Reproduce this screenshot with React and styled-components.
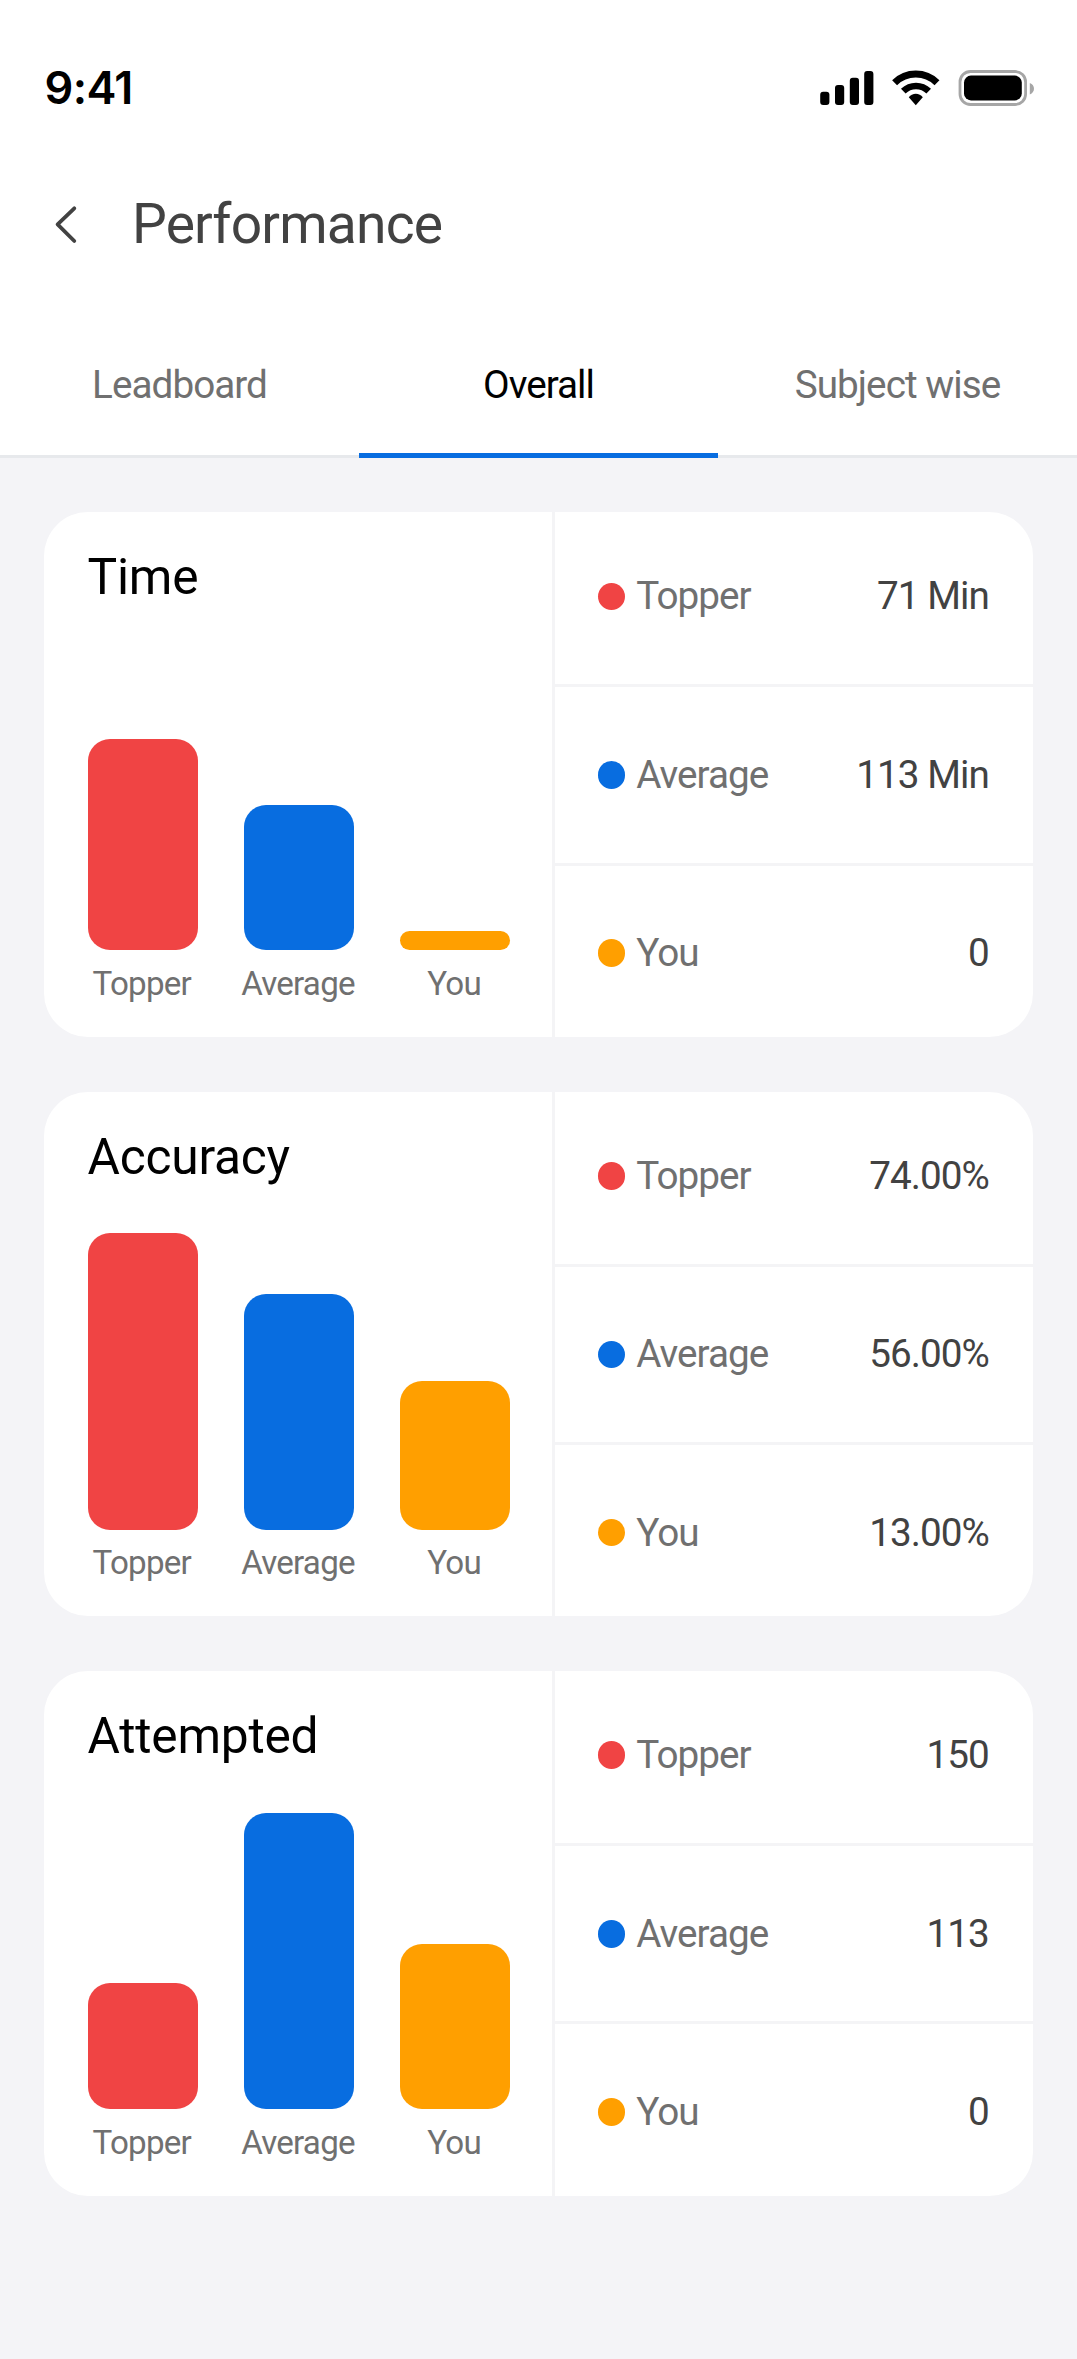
import React from "react";
import styled, { createGlobalStyle } from "styled-components";

const GlobalStyle = createGlobalStyle`
  *, *::before, *::after { box-sizing: border-box; }
  body {
    margin: 0;
    background: #f4f4f7;
    font-family: Roboto, "Liberation Sans", sans-serif;
  }
`;

const colors = { topper: "#f04444", average: "#086de0", you: "#ff9f00" };

const Screen = styled.div`
  width: 1077px;
  min-height: 2359px;
  display: flex;
  flex-direction: column;
  background: #f4f4f7;
`;

const Top = styled.header`
  background: #fff;
`;

const StatusBar = styled.div`
  height: 136px;
  padding: 40px 43px 0 44.6px;
  display: flex;
  align-items: center;
  justify-content: space-between;
`;

const Clock = styled.span`
  font-family: Inter, sans-serif;
  font-size: 45px;
  font-weight: 600;
  line-height: 54px;
  letter-spacing: -0.015em;
  color: #000;
`;

const StatusIcons = styled.svg`
  width: 214px;
  height: 36px;
  display: block;
`;

const TitleBar = styled.div`
  height: 176px;
  padding-left: 54px;
  display: flex;
  align-items: center;
  gap: 54px;
`;

const BackButton = styled.button`
  padding: 0;
  border: 0;
  background: none;
  width: 24px;
  height: 40px;
  display: flex;
`;

const PageTitle = styled.h1`
  margin: 0;
  font-size: 55.2px;
  font-weight: 400;
  line-height: 64px;
  letter-spacing: -0.015em;
  color: #424242;
`;

const Tabs = styled.nav`
  display: grid;
  grid-template-columns: repeat(3, 1fr);
  height: 146px;
`;

const Tab = styled.a`
  display: flex;
  align-items: center;
  justify-content: center;
  font-size: 38.66px;
  line-height: 46px;
  letter-spacing: -0.025em;
  color: ${(p) => (p.$active ? "#000" : "#707070")};
  box-shadow: inset 0 ${(p) => (p.$active ? "-5px #086de0" : "-3px #e7e9ec")};
`;

const Cards = styled.main`
  display: flex;
  flex-direction: column;
  gap: 55px;
  padding: 54.4px 44.2px;
`;

const Card = styled.section`
  height: 524.4px;
  display: flex;
  border-radius: 44px;
  background: #fff;
  overflow: hidden;
`;

const Chart = styled.div`
  width: 511px;
  border-right: 3px solid #f4f4f6;
  padding: 36px 0 34px 43.4px;
  display: flex;
  flex-direction: column;
  justify-content: space-between;
`;

const CardTitle = styled.h2`
  margin: 0;
  font-size: 49.7px;
  font-weight: 400;
  line-height: 58px;
  letter-spacing: -0.005em;
  color: #000;
`;

const Bars = styled.div`
  display: flex;
  align-items: flex-end;
  gap: 45.8px;
`;

const BarColumn = styled.div`
  width: 110.4px;
  display: flex;
  flex-direction: column;
  align-items: center;
  gap: 13.3px;
`;

const Bar = styled.div`
  width: 100%;
  border-radius: 22px;
  background: ${(p) => p.$color};
`;

const BarLabel = styled.span`
  margin-right: 2px;
  font-size: 33.14px;
  line-height: 39px;
  letter-spacing: -0.023em;
  white-space: nowrap;
  color: #707070;
`;

const Legend = styled.div`
  flex: 1;
  display: flex;
  flex-direction: column;
`;

const LegendRow = styled.div`
  height: 178.3px;
  padding: 0 44px 0 42.4px;
  display: flex;
  align-items: center;
  border-bottom: 3px solid #f4f4f6;
  font-size: 38.66px;
  line-height: 46px;
  letter-spacing: -0.025em;

  &:first-child {
    height: 175px;
    padding-bottom: 4px;
  }

  &:last-child {
    height: auto;
    flex: 1;
    padding-top: 4px;
    border-bottom: 0;
  }
`;

const Dot = styled.i`
  width: 27.6px;
  height: 27.6px;
  border-radius: 50%;
  background: ${(p) => p.$color};
`;

const LegendLabel = styled.span`
  margin-left: 11px;
  color: #707070;
`;

const LegendValue = styled.span`
  margin-left: auto;
  color: #424242;
`;

const series = [
  { key: "topper", label: "Topper" },
  { key: "average", label: "Average" },
  { key: "you", label: "You" },
];

const metrics = [
  { title: "Time", values: ["71 Min", "113 Min", "0"], bars: [211, 145, 19.4] },
  { title: "Accuracy", values: ["74.00%", "56.00%", "13.00%"], bars: [296.4, 236, 148.6] },
  { title: "Attempted", values: ["150", "113", "0"], bars: [126.4, 296.4, 165] },
];

function Status() {
  return (
    <StatusIcons viewBox="820 70 214 36">
      <rect x="820.2" y="91.7" width="9.2" height="13.3" rx="3" />
      <rect x="835" y="85" width="9.2" height="20" rx="3" />
      <rect x="849.8" y="77.8" width="9.2" height="27.2" rx="3" />
      <rect x="864.2" y="71" width="9.2" height="34" rx="3" />
      <g fill="none" stroke="#000">
        <path strokeWidth="7" d="M894.6 82.8 A30.2 30.2 0 0 1 937 82.8" />
        <path strokeWidth="6.6" d="M903.3 91.2 A18.2 18.2 0 0 1 928.7 91.2" />
      </g>
      <path d="M915.8 105.2 L908.8 97.2 A8.9 8.9 0 0 1 922.8 97.2 Z" />
      <rect x="960" y="71.5" width="65.6" height="33" rx="10.5" fill="none" stroke="#a6a6a6" strokeWidth="2.8" />
      <rect x="964" y="75.6" width="57.8" height="24.8" rx="7" />
      <path d="M1029.8 83 C1035.4 85 1035.4 92.4 1029.8 94.4 Z" fill="#a6a6a6" />
    </StatusIcons>
  );
}

function MetricCard({ title, values, bars }) {
  return (
    <Card>
      <Chart>
        <CardTitle>{title}</CardTitle>
        <Bars>
          {series.map((s, i) => (
            <BarColumn key={s.key}>
              <Bar $color={colors[s.key]} style={{ height: bars[i] }} />
              <BarLabel>{s.label}</BarLabel>
            </BarColumn>
          ))}
        </Bars>
      </Chart>
      <Legend>
        {series.map((s, i) => (
          <LegendRow key={s.key}>
            <Dot $color={colors[s.key]} />
            <LegendLabel>{s.label}</LegendLabel>
            <LegendValue>{values[i]}</LegendValue>
          </LegendRow>
        ))}
      </Legend>
    </Card>
  );
}

export default function App() {
  return (
    <Screen>
      <GlobalStyle />
      <Top>
        <StatusBar>
          <Clock>9:41</Clock>
          <Status />
        </StatusBar>
        <TitleBar>
          <BackButton aria-label="Back">
            <svg width="24" height="40" viewBox="0 0 24 40" fill="none" stroke="#424242" strokeWidth="3.8" strokeLinecap="round" strokeLinejoin="round">
              <path d="M20.3 4.3 L3.6 20.4 L20.3 37" />
            </svg>
          </BackButton>
          <PageTitle>Performance</PageTitle>
        </TitleBar>
        <Tabs>
          <Tab>Leadboard</Tab>
          <Tab $active>Overall</Tab>
          <Tab>Subject wise</Tab>
        </Tabs>
      </Top>
      <Cards>
        {metrics.map((m) => (
          <MetricCard key={m.title} {...m} />
        ))}
      </Cards>
    </Screen>
  );
}
